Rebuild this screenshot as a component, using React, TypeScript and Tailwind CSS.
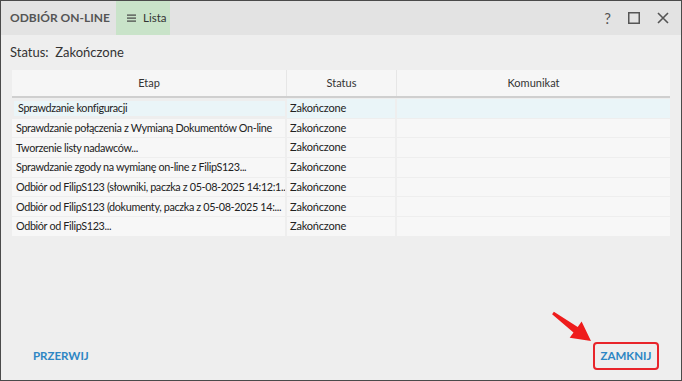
import React from "react";

const rows = [
  "Sprawdzanie konfiguracji",
  "Sprawdzanie połączenia z Wymianą Dokumentów On-line",
  "Tworzenie listy nadawców...",
  "Sprawdzanie zgody na wymianę on-line z FilipS123...",
  "Odbiór od FilipS123 (słowniki, paczka z 05-08-2025 14:12:1...",
  "Odbiór od FilipS123 (dokumenty, paczka z 05-08-2025 14:...",
  "Odbiór od FilipS123...",
];

export default function App() {
  return (
    <div
      className="relative w-[682px] h-[381px] border border-[#4a4a4a] bg-[#eeeeee] flex flex-col text-[#222]"
      style={{ fontFamily: 'Lato, "Noto Sans", sans-serif' }}
    >
      <div className="h-[34px] bg-[#e3e3e3] flex items-stretch shrink-0">
        <div className="w-[115px] pl-[9px] flex items-center font-bold text-[12px] text-[#555]">ODBIÓR ON-LINE</div>
        <div className="w-[54px] bg-[#c9e3c9] flex items-center pl-[11px] gap-[7px] text-[11.5px] text-[#333]">
          <svg width="9" height="8" viewBox="0 0 9 8">
            <rect x="0" y="0.5" width="9" height="1.2" fill="#444" />
            <rect x="0" y="3.5" width="9" height="1.2" fill="#444" />
            <rect x="0" y="6.5" width="9" height="1.2" fill="#444" />
          </svg>
          <span>Lista</span>
        </div>
        <div className="flex-1" />
        <div className="flex items-center gap-[17px] pr-[12px] text-[#555]">
          <span className="text-[15px] font-normal leading-none">?</span>
          <svg width="12" height="12" viewBox="0 0 12 12">
            <rect x="0.75" y="0.75" width="10.5" height="10.5" fill="none" stroke="#555" strokeWidth="1.5" />
          </svg>
          <svg width="12" height="12" viewBox="0 0 12 12">
            <path d="M1 1 L11 11 M11 1 L1 11" stroke="#555" strokeWidth="1.6" />
          </svg>
        </div>
      </div>
      <div className="pl-[9px] pt-[8px] text-[13px] leading-[18px] text-[#333]">
        Status:&nbsp;&nbsp;Zakończone
      </div>
      <div className="mx-[11px] mt-[9px] text-[11px]">
        <div className="grid grid-cols-[275px_110px_1fr] h-[28px] bg-[#f6f6f6] border-b-2 border-[#cfcfcf] text-[#333]">
          <div className="flex items-center justify-center border-r border-[#e6e6e6]">Etap</div>
          <div className="flex items-center justify-center border-r border-[#e6e6e6]">Status</div>
          <div className="flex items-center justify-center">Komunikat</div>
        </div>
        {rows.map((r, i) => (
          <div
            key={i}
            className={`grid grid-cols-[275px_110px_1fr] h-[18.7px] mt-[1px] ${i === 0 ? "bg-[#eaf5f8]" : "bg-[#f7f7f7]"}`}
          >
            <div
              className={`flex items-center pl-[4px] border-r-2 border-[#eeeeee] whitespace-nowrap overflow-hidden text-[10.8px] tracking-[-0.35px] ${i === 0 ? "border-2 border-[#3f9bd8] bg-[#eaf5f8] pl-[3px]" : ""}`}
            >
              {r}
            </div>
            <div className="flex items-center pl-[3px] border-r-2 border-[#eeeeee] tracking-[-0.2px]">Zakończone</div>
            <div />
          </div>
        ))}
      </div>
      <div className="flex-1" />
      <div className="flex items-center justify-between h-[40px] pl-[32px] pr-[22px] pb-[8px]">
        <span className="text-[11.5px] font-bold text-[#2d86c4]">PRZERWIJ</span>
        <div className="border-2 border-[#e8242a] rounded-[4px] px-[8px] h-[28px] w-[66px] flex items-center justify-center">
          <span className="text-[11.5px] font-bold text-[#2d86c4]">ZAMKNIJ</span>
        </div>
      </div>
      <svg className="absolute left-[548px] top-[308px]" width="46" height="36" viewBox="0 0 46 36">
        <path d="M4.9 2.8 L28.7 17.9 L32.6 12.6 L42 32 L20.7 28.8 L24.5 23.5 L3.1 5.2 Z" fill="#ee1c1c" />
      </svg>
    </div>
  );
}
